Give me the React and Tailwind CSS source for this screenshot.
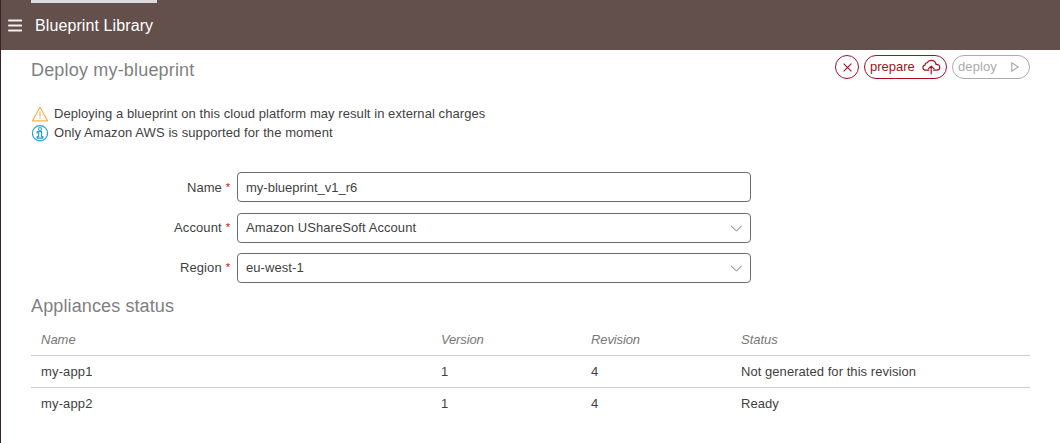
const appliances = [
  { name: "my-app1", version: "1", revision: "4", status: "Not generated for this revision" },
  { name: "my-app2", version: "1", revision: "4", status: "Ready" },
];

function MenuIcon() {
  return (
    <svg className="mb-[2px] h-[14px] w-[14px]" viewBox="0 0 14 14" stroke="#f1eeee" strokeWidth="1.8" strokeLinecap="round">
      <path d="M.9 2.5h12.4M.9 7.5h12.4M.9 12.5h12.4" />
    </svg>
  );
}

function WarningIcon() {
  return (
    <svg className="h-[18px] w-[18px]" viewBox="0 0 18 18" fill="none" stroke="#f7b24d" strokeLinejoin="round">
      <path d="M9 2.2 16.6 15.8H1.4Z" strokeWidth="1.2" />
      <path d="M9 6.4v5.4M9 12.4v1.6" strokeWidth="1.5" strokeOpacity=".75" />
    </svg>
  );
}

function InfoIcon() {
  return (
    <svg className="h-[18px] w-[18px]" viewBox="0 0 18 18" fill="none" stroke="#2a9fd0">
      <circle cx="9" cy="9.2" r="7.6" strokeWidth="1.25" />
      <circle cx="9" cy="5" r="1.5" strokeWidth="1.1" />
      <path d="M6.2 7.6h4.3v5h1.3v1.5H6.2v-1.5h1.4V9H6.2Z" strokeWidth="1.15" />
    </svg>
  );
}

function CloudUploadIcon() {
  return (
    <svg className="h-4 w-[19px] shrink-0" viewBox="0 0 19 16" fill="none" stroke="#a50f20" strokeWidth="1.2" strokeLinecap="round" strokeLinejoin="round">
      <path d="M6.7 11.2H3.8C2.1 11.2.9 10.1.9 8.6c0-1.3.9-2.2 2.2-2.4C2.8 4.6 3.8 3.6 5.2 3.8 6 2.2 7.2 1.4 9 1.4c2.7 0 4.7 1.6 5 4 1.9-.2 3.8 1 3.8 2.9 0 1.8-1.3 2.9-3.2 2.9h-2.9" />
      <path d="M9.2 14.8V7.2M6.3 9.9l2.9-2.8 3 2.8" />
    </svg>
  );
}

function PlayIcon() {
  return (
    <svg className="h-[10px] w-2 shrink-0" viewBox="0 0 8 10" fill="none" stroke="#ababab" strokeWidth="1.2" strokeLinejoin="round">
      <path d="M.8.7v8.6L7.2 5Z" />
    </svg>
  );
}

function Field({ label, value, select }) {
  return (
    <div className="flex h-[30px] items-center">
      <label className="flex w-[199px] justify-end gap-[4px]">
        <span className={select ? "pb-[1px] tracking-[0.1px]" : ""}>{label}</span>
        <span className="text-[11px] leading-[18px] text-[#e00914]">*</span>
      </label>
      <div className="ml-[7px] flex h-[30px] w-[514px] items-center justify-between rounded-[4px] border border-[#6b6b6b] pr-2 pl-2">
        <span className={select ? "pb-[2px] tracking-[0.07px]" : ""}>{value}</span>
        {select && (
          <svg className="h-[7px] w-3" viewBox="0 0 12 7" fill="none" stroke="#777777">
            <path d="M1 .7 6.5 6 11.8.7" />
          </svg>
        )}
      </div>
    </div>
  );
}

export default function App() {
  return (
    <div className="h-[443px] w-[1060px] overflow-hidden border-l border-[#3a2325] bg-white font-['Liberation_Sans',Arial,sans-serif] text-[13px] leading-[19px] text-[#3f3f3f]">
      <header className="h-[50px] bg-[#63504d]">
        <div className="ml-[30px] h-[3px] w-[126px] bg-[#dcdadb]" />
        <div className="flex h-[45px] items-center pl-[7px] text-white">
          <MenuIcon />
          <h1 className="ml-[13px] text-[16px] tracking-[0.1px]">Blueprint Library</h1>
        </div>
      </header>
      <main className="pr-[30px] pl-[30px]">
        <div className="flex h-[39px] items-start justify-between pt-[5px]">
          <h2 className="pt-[6px] text-[18px] tracking-[0.18px] text-[#7f7f7f]">Deploy my-blueprint</h2>
          <div className="flex gap-[5px]">
            <button className="flex size-6 items-center justify-center rounded-full border border-[#a50f20]">
              <svg className="size-[9px]" viewBox="0 0 9 9" stroke="#a50f20" strokeWidth="1.1">
                <path d="m.6.6 7.8 7.8M8.4.6.6 8.4" />
              </svg>
            </button>
            <button className="flex h-6 w-[83px] items-center justify-between rounded-full border border-[#a50f20] pr-[5px] pl-[5px] text-[#a50f20]">
              <span className="pb-[2px]">prepare</span>
              <CloudUploadIcon />
            </button>
            <button className="flex h-6 w-[78px] items-center justify-between rounded-full border border-[#ababab] pr-[10px] pl-[5px] text-[#ababab]">
              <span className="pb-[2px] tracking-[0.1px]">deploy</span>
              <PlayIcon />
            </button>
          </div>
        </div>
        <div className="mt-[15px]">
          <p className="flex h-[19px] items-center gap-[5px]">
            <WarningIcon />
            <span className="tracking-[0.066px]">Deploying a blueprint on this cloud platform may result in external charges</span>
          </p>
          <p className="flex h-[19px] items-center gap-[5px]">
            <InfoIcon />
            <span className="tracking-[0.09px]">Only Amazon AWS is supported for the moment</span>
          </p>
        </div>
        <form className="mt-[30px]">
          <Field label="Name" value="my-blueprint_v1_r6" />
          <div className="mt-[11px] flex flex-col gap-[10px]">
            <Field label="Account" value="Amazon UShareSoft Account" select />
            <Field label="Region" value="eu-west-1" select />
          </div>
        </form>
        <h2 className="mt-[14px] h-[26px] text-[18px] tracking-[0.12px] text-[#7f7f7f]">Appliances status</h2>
        <table className="w-[999px] table-fixed border-collapse text-left">
          <colgroup>
            <col className="w-[400px]" />
            <col className="w-[150px]" />
            <col className="w-[150px]" />
            <col />
          </colgroup>
          <thead>
            <tr className="h-8 border-b border-[#cfcfcf] text-[#777777] italic">
              <th className="pt-[1px] pl-[10px] font-normal">Name</th>
              <th className="pt-[1px] pl-[10px] font-normal tracking-[-0.15px]">Version</th>
              <th className="pt-[1px] pl-[10px] font-normal tracking-[-0.12px]">Revision</th>
              <th className="pt-[1px] pl-[10px] font-normal">Status</th>
            </tr>
          </thead>
          <tbody>
            {appliances.map((a) => (
              <tr key={a.name} className="h-8 border-b border-[#cfcfcf] last:border-b-0">
                <td className="pl-[10px] tracking-[0.15px]">{a.name}</td>
                <td className="pl-[10px]">{a.version}</td>
                <td className="pl-[10px]">{a.revision}</td>
                <td className="pl-[10px] tracking-[0.05px]">{a.status}</td>
              </tr>
            ))}
          </tbody>
        </table>
      </main>
    </div>
  );
}
